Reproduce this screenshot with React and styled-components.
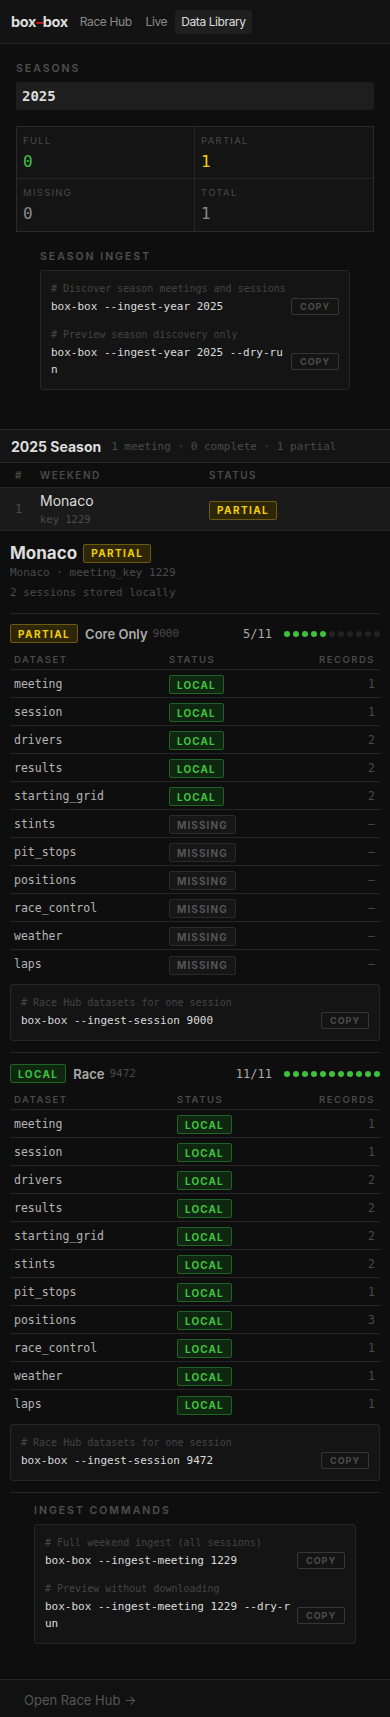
import React from "react";
import styled, { createGlobalStyle, css } from "styled-components";

const GlobalStyle = createGlobalStyle`
  body {
    margin: 0;
    background: #0e0e0e;
    font-family: Inter, "Noto Sans", sans-serif;
    color: #ddd;
  }
  * { box-sizing: border-box; }
`;

const mono = `"DejaVu Sans Mono", "Liberation Mono", monospace`;

const Header = styled.header`
  height: 44px;
  display: flex;
  align-items: center;
  padding: 0 10px 0 11px;
  background: #131313;
  border-bottom: 1px solid #262626;
`;

const Logo = styled.div`
  font-weight: 700;
  font-size: 14.5px;
  color: #ddd;
  margin-right: 6px;
  letter-spacing: -0.4px;
  span { color: #d01818; }
`;

const NavLink = styled.a`
  font-size: 12px;
  line-height: 14px;
  letter-spacing: -0.4px;
  padding: 5px 6px;
  border-radius: 4px;
  color: ${({ $active }) => ($active ? "#ddd" : "#8a8a8a")};
  background: ${({ $active }) => ($active ? "#1f1f1f" : "transparent")};
  margin-right: 2px;
`;

const Section = styled.section`
  padding: 18px 16px 39px;
`;

const Label = styled.div`
  font-size: 10.5px;
  line-height: 13px;
  font-weight: 600;
  letter-spacing: 2px;
  text-transform: uppercase;
  color: #4f4f4f;
  margin-bottom: 7px;
`;

const SeasonSelect = styled.div`
  height: 28px;
  background: #1e1e1e;
  border-radius: 3px;
  display: flex;
  align-items: center;
  padding: 0 6px;
  font-family: ${mono};
  font-weight: 700;
  font-size: 14px;
  color: #ddd;
`;

const StatsGrid = styled.div`
  margin-top: 16px;
  display: grid;
  grid-template-columns: 1fr 1fr;
  border: 1px solid #2a2a2a;
  background: #141414;
`;

const StatCell = styled.div`
  height: 52px;
  padding: 8px 6px 0;
  border-right: ${({ $right }) => ($right ? "none" : "1px solid #252525")};
  border-bottom: ${({ $bottom }) => ($bottom ? "none" : "1px solid #252525")};
`;

const StatLabel = styled.div`
  font-size: 9.5px;
  line-height: 12px;
  letter-spacing: 1.3px;
  text-transform: uppercase;
  color: #4a4a4a;
`;

const StatValue = styled.div`
  font-family: ${mono};
  font-size: 16px;
  line-height: 20px;
  margin-top: 5px;
  color: ${({ $color }) => $color};
`;

const IngestBlock = styled.div`
  padding: ${({ $pad }) => $pad};
`;

const CodeBox = styled.div`
  background: #141414;
  border: 1px solid #262626;
  border-radius: 3px;
  padding: 10px 10px 11px;
  display: flex;
  flex-direction: column;
  gap: 12px;
`;

const CodeEntry = styled.div``;

const Comment = styled.div`
  font-family: ${mono};
  font-size: 10px;
  line-height: 15px;
  color: #444;
`;

const CommandRow = styled.div`
  display: flex;
  align-items: center;
  gap: 6px;
  margin-top: 2px;
`;

const Command = styled.div`
  flex: 1;
  font-family: ${mono};
  font-size: 11px;
  line-height: 17px;
  color: #ddd;
  word-break: break-all;
`;

const CopyButton = styled.button`
  flex-shrink: 0;
  width: 48px;
  height: 17px;
  padding: 0;
  background: transparent;
  border: 1px solid #363636;
  border-radius: 2px;
  color: #4e4e4e;
  font-family: Inter, sans-serif;
  font-size: 9px;
  font-weight: 700;
  letter-spacing: 1px;
`;

const SeasonPanel = styled.div`
  border-top: 1px solid #262626;
`;

const PanelHeader = styled.div`
  height: 33px;
  display: flex;
  align-items: center;
  padding: 0 11px;
  background: #141414;
  border-bottom: 1px solid #262626;
  gap: 10px;
`;

const PanelTitle = styled.div`
  font-size: 14px;
  font-weight: 700;
  color: #ddd;
`;

const Meta = styled.div`
  font-family: ${mono};
  font-size: 11px;
  color: #4a4a4a;
`;

const WeekendGrid = styled.div`
  display: grid;
  grid-template-columns: 25px 169px 1fr;
  padding-left: 15px;
  align-items: center;
  ${({ $head }) =>
    $head
      ? css`
          height: 24px;
          font-size: 10px;
          font-weight: 600;
          letter-spacing: 1.5px;
          color: #4a4a4a;
        `
      : css`
          height: 44px;
          background: #1a1a1a;
          border-top: 1px solid #262626;
          border-bottom: 1px solid #262626;
        `}
`;

const RowNum = styled.div`
  font-family: ${mono};
  font-size: 12px;
  color: #4a4a4a;
`;

const WeekendName = styled.div`
  font-size: 14px;
  color: #ddd;
  line-height: 17px;
`;

const WeekendKey = styled.div`
  font-family: ${mono};
  font-size: 10.5px;
  line-height: 13px;
  color: #4a4a4a;
  margin-top: 4px;
`;

const badgeColors = {
  partial: { bg: "#2d2708", border: "#6a5a12", color: "#f2cf0a" },
  local: { bg: "#0f2711", border: "#1f6424", color: "#3ec23e" },
  missing: { bg: "#161616", border: "#2a2a2a", color: "#555" },
};

const Badge = styled.span`
  display: inline-flex;
  align-items: center;
  justify-content: center;
  height: 19px;
  padding: 0 ${({ $pad }) => $pad || 7}px;
  font-size: 10px;
  font-weight: 700;
  letter-spacing: ${({ $ls }) => $ls || 1.1}px;
  border-radius: 2px;
  background: ${({ $kind }) => badgeColors[$kind].bg};
  border: 1px solid ${({ $kind }) => badgeColors[$kind].border};
  color: ${({ $kind }) => badgeColors[$kind].color};
`;

const Detail = styled.div`
  padding: 12px 10px 0;
`;

const DetailTitleRow = styled.div`
  display: flex;
  align-items: center;
  gap: 6px;
  height: 20px;
`;

const DetailTitle = styled.h2`
  margin: 0;
  font-size: 17px;
  font-weight: 700;
  color: #ddd;
`;

const SubLine = styled.div`
  font-family: ${mono};
  font-size: 11px;
  line-height: 20px;
  color: #4a4a4a;
`;

const Divider = styled.div`
  height: 1px;
  background: #262626;
  margin: ${({ $m }) => $m};
`;

const SessionHeader = styled.div`
  display: flex;
  align-items: center;
  height: 19px;
`;

const SessionName = styled.span`
  font-size: 13px;
  font-weight: 600;
  color: #aaa;
  margin-left: 7px;
`;

const SessionId = styled.span`
  font-family: ${mono};
  font-size: 11px;
  color: #4a4a4a;
  margin-left: 5px;
`;

const Progress = styled.span`
  margin-left: auto;
  font-family: ${mono};
  font-size: 12px;
  color: #aaa;
`;

const Dots = styled.div`
  display: flex;
  gap: 3px;
  margin-left: 12px;
`;

const Dot = styled.span`
  width: 6px;
  height: 6px;
  border-radius: 50%;
  background: ${({ $on }) => ($on ? "#3ec23e" : "#222")};
`;

const DataRow = styled.div`
  display: grid;
  grid-template-columns: ${({ $col }) => $col}px 1fr auto;
  align-items: center;
  padding: 0 5px 0 4px;
  ${({ $head }) =>
    $head
      ? css`
          margin-top: 7px;
          height: 20px;
          font-size: 9.5px;
          font-weight: 600;
          letter-spacing: 1.5px;
          color: #4a4a4a;
          border-bottom: 1px solid #262626;
        `
      : css`
          height: 28px;
          border-bottom: 1px solid #262626;
          &:last-of-type { border-bottom: none; }
        `}
`;

const DatasetName = styled.div`
  font-family: ${mono};
  font-size: 11.5px;
  color: #b5b5b5;
`;

const Records = styled.div`
  font-family: ${mono};
  font-size: 11.5px;
  color: #4a4a4a;
  text-align: right;
`;

const SessionCode = styled.div`
  margin-top: 6px;
`;

const Footer = styled.footer`
  margin-top: 35px;
  border-top: 1px solid #262626;
  background: #111;
  padding: 12px 24px 14px;
  font-size: 13px;
  line-height: 16px;
  color: #555;
`;

const datasets = [
  "meeting",
  "session",
  "drivers",
  "results",
  "starting_grid",
  "stints",
  "pit_stops",
  "positions",
  "race_control",
  "weather",
  "laps",
];

const coreRecords = ["1", "1", "2", "2", "2", null, null, null, null, null, null];
const raceRecords = ["1", "1", "2", "2", "2", "2", "1", "3", "1", "1", "1"];

const CodeLine = ({ comment, command }) => (
  <CodeEntry>
    <Comment># {comment}</Comment>
    <CommandRow>
      <Command>{command}</Command>
      <CopyButton>COPY</CopyButton>
    </CommandRow>
  </CodeEntry>
);

const SessionBlock = ({ status, name, id, records, col }) => {
  const done = records.filter(Boolean).length;
  return (
    <div>
      <SessionHeader>
        <Badge $kind={status} $ls={1.4}>{status.toUpperCase()}</Badge>
        <SessionName>{name}</SessionName>
        <SessionId>{id}</SessionId>
        <Progress>
          {done}/{datasets.length}
        </Progress>
        <Dots>
          {datasets.map((d, i) => (
            <Dot key={d} $on={i < done} />
          ))}
        </Dots>
      </SessionHeader>
      <DataRow $head $col={col}>
        <div>DATASET</div>
        <div>STATUS</div>
        <div>RECORDS</div>
      </DataRow>
      <div>
        {datasets.map((d, i) => (
          <DataRow key={d} $col={col}>
            <DatasetName>{d}</DatasetName>
            <div>
              {records[i] ? (
                <Badge $kind="local">LOCAL</Badge>
              ) : (
                <Badge $kind="missing">MISSING</Badge>
              )}
            </div>
            <Records>{records[i] || "—"}</Records>
          </DataRow>
        ))}
      </div>
      <SessionCode>
        <CodeBox>
          <CodeLine
            comment="Race Hub datasets for one session"
            command={`box-box --ingest-session ${id}`}
          />
        </CodeBox>
      </SessionCode>
    </div>
  );
};

const App = () => (
  <>
    <GlobalStyle />
    <Header>
      <Logo>
        box<span>–</span>box
      </Logo>
      <NavLink>Race Hub</NavLink>
      <NavLink>Live</NavLink>
      <NavLink $active>Data Library</NavLink>
    </Header>

    <Section>
      <Label>Seasons</Label>
      <SeasonSelect>2025</SeasonSelect>
      <StatsGrid>
        <StatCell>
          <StatLabel>Full</StatLabel>
          <StatValue $color="#3ec23e">0</StatValue>
        </StatCell>
        <StatCell $right>
          <StatLabel>Partial</StatLabel>
          <StatValue $color="#f2cf0a">1</StatValue>
        </StatCell>
        <StatCell $bottom>
          <StatLabel>Missing</StatLabel>
          <StatValue $color="#8a8a8a">0</StatValue>
        </StatCell>
        <StatCell $right $bottom>
          <StatLabel>Total</StatLabel>
          <StatValue $color="#8a8a8a">1</StatValue>
        </StatCell>
      </StatsGrid>
      <IngestBlock $pad="18px 24px 0">
        <Label>Season Ingest</Label>
        <CodeBox>
          <CodeLine
            comment="Discover season meetings and sessions"
            command="box-box --ingest-year 2025"
          />
          <CodeLine
            comment="Preview season discovery only"
            command="box-box --ingest-year 2025 --dry-run"
          />
        </CodeBox>
      </IngestBlock>
    </Section>

    <SeasonPanel>
      <PanelHeader>
        <PanelTitle>2025 Season</PanelTitle>
        <Meta>1 meeting · 0 complete · 1 partial</Meta>
      </PanelHeader>
      <WeekendGrid $head>
        <div>#</div>
        <div>WEEKEND</div>
        <div>STATUS</div>
      </WeekendGrid>
      <WeekendGrid>
        <RowNum>1</RowNum>
        <div>
          <WeekendName>Monaco</WeekendName>
          <WeekendKey>key 1229</WeekendKey>
        </div>
        <div>
          <Badge $kind="partial" $ls={1.4}>PARTIAL</Badge>
        </div>
      </WeekendGrid>
    </SeasonPanel>

    <Detail>
      <DetailTitleRow>
        <DetailTitle>Monaco</DetailTitle>
        <Badge $kind="partial" $ls={1.4}>PARTIAL</Badge>
      </DetailTitleRow>
      <SubLine>Monaco · meeting_key 1229</SubLine>
      <SubLine>2 sessions stored locally</SubLine>
      <Divider $m="10px 0 10px" />
      <SessionBlock status="partial" name="Core Only" id="9000" records={coreRecords} col={155} />
      <Divider $m="11px 0 11px" />
      <SessionBlock status="local" name="Race" id="9472" records={raceRecords} col={163} />
      <Divider $m="11px 0 11px" />
      <IngestBlock $pad="0 24px">
        <Label>Ingest Commands</Label>
        <CodeBox>
          <CodeLine
            comment="Full weekend ingest (all sessions)"
            command="box-box --ingest-meeting 1229"
          />
          <CodeLine
            comment="Preview without downloading"
            command="box-box --ingest-meeting 1229 --dry-run"
          />
        </CodeBox>
      </IngestBlock>
    </Detail>

    <Footer>Open Race Hub →</Footer>
  </>
);

export default App;
